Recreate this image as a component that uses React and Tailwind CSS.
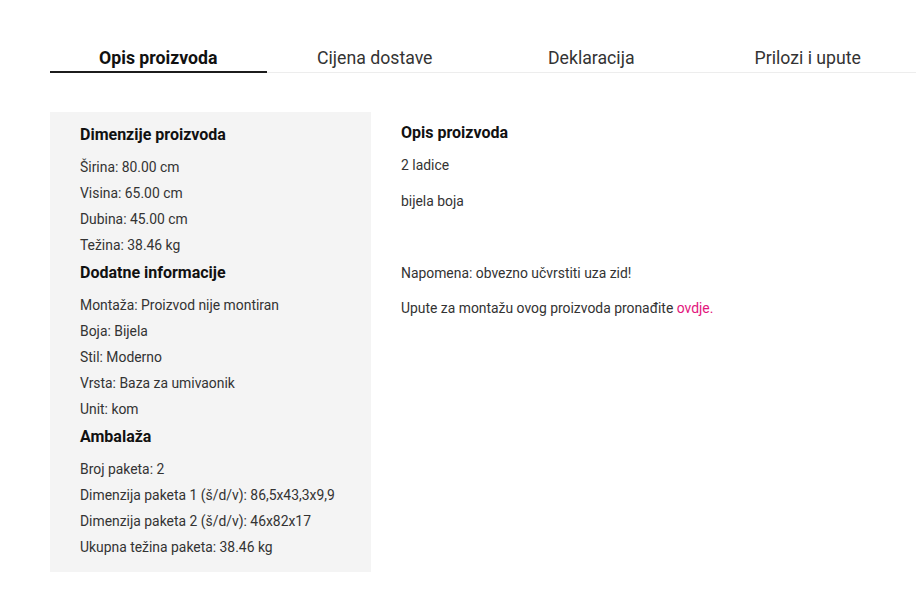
import React from "react";

const tabs = ["Opis proizvoda", "Cijena dostave", "Deklaracija", "Prilozi i upute"];

const sections = [
  {
    title: "Dimenzije proizvoda",
    items: ["Širina: 80.00 cm", "Visina: 65.00 cm", "Dubina: 45.00 cm", "Težina: 38.46 kg"],
  },
  {
    title: "Dodatne informacije",
    items: [
      "Montaža: Proizvod nije montiran",
      "Boja: Bijela",
      "Stil: Moderno",
      "Vrsta: Baza za umivaonik",
      "Unit: kom",
    ],
  },
  {
    title: "Ambalaža",
    items: [
      "Broj paketa: 2",
      "Dimenzija paketa 1 (š/d/v): 86,5x43,3x9,9",
      "Dimenzija paketa 2 (š/d/v): 46x82x17",
      "Ukupna težina paketa: 38.46 kg",
    ],
  },
];

export default function App() {
  return (
    <div
      className="w-[920px] h-[605px] bg-white overflow-hidden"
      style={{ fontFamily: "Roboto, 'Liberation Sans', sans-serif" }}
    >
      <div className="ml-[50px] w-[866px] pt-[46px]">
        <div className="flex border-b border-[#ededed]">
          {tabs.map((t, i) => (
            <div
              key={t}
              className={
                i === 0
                  ? "flex-1 text-center text-[17.7px] leading-[24px] font-bold text-[#111] pb-[1px] -mb-px border-b-2 border-[#1c1c1c]"
                  : "flex-1 text-center text-[17.7px] leading-[24px] text-[#333] pb-[1px] -mb-px border-b-2 border-transparent"
              }
            >
              {t}
            </div>
          ))}
        </div>

        <div className="flex mt-[39px] gap-[30px]">
          <div className="w-[321px] bg-[#f4f4f4] pl-[30px] pr-[6px] pt-[10px] pb-[12px]">
            {sections.map((s, i) => (
              <div key={s.title} className={i > 0 ? "mt-[2px]" : ""}>
                <div className="text-[16px] leading-[26px] font-bold text-[#111] mb-[6px]">
                  {s.title}
                </div>
                {s.items.map((it) => (
                  <div key={it} className="text-[13.9px] leading-[26px] text-[#333] whitespace-nowrap">
                    {it}
                  </div>
                ))}
              </div>
            ))}
          </div>

          <div className="flex-1 pt-[8px]">
            <div className="text-[16px] leading-[26px] font-bold text-[#111] mb-[6px]">
              Opis proizvoda
            </div>
            <p className="text-[13.9px] leading-[26px] text-[#333] mb-[10px]">2 ladice</p>
            <p className="text-[13.9px] leading-[26px] text-[#333] mb-[10px]">bijela boja</p>
            <p className="text-[13.9px] leading-[26px] text-[#333] mb-[10px]">&nbsp;</p>
            <p className="text-[13.9px] leading-[26px] text-[#333] mb-[9px]">
              Napomena: obvezno učvrstiti uza zid!
            </p>
            <p className="text-[13.9px] leading-[26px] text-[#333]">
              Upute za montažu ovog proizvoda pronađite{" "}
              <a className="text-[#e2167d]">ovdje.</a>
            </p>
          </div>
        </div>
      </div>
    </div>
  );
}
